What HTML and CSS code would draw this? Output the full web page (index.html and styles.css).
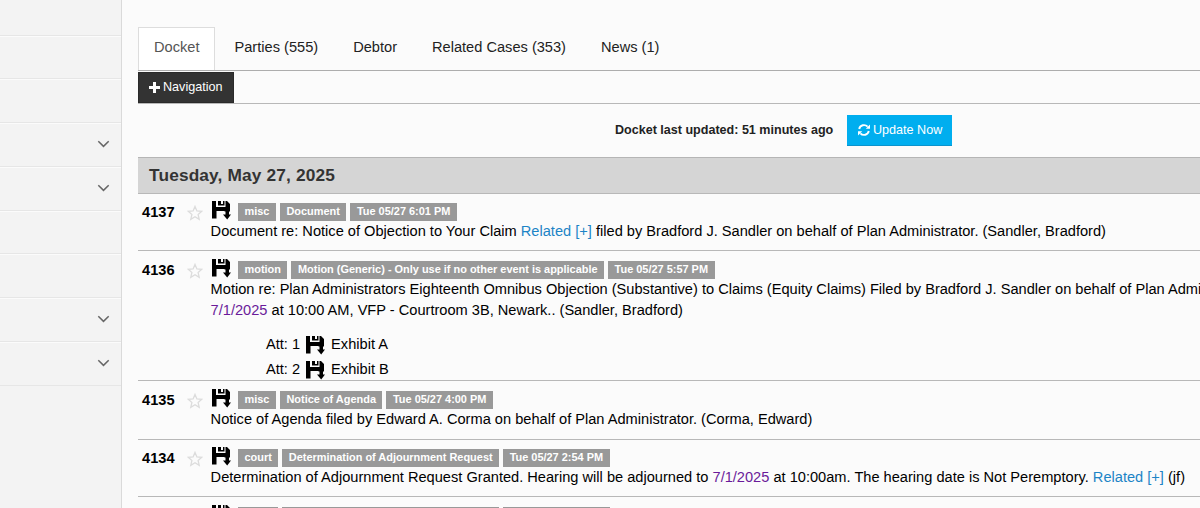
FILE: index.html
```html
<!DOCTYPE html>
<html lang="en">
<head>
    <meta charset="UTF-8">
    <meta name="viewport" content="width=device-width, initial-scale=1.0">
    <title>Docket</title>
    <link rel="stylesheet" href="styles.css">
</head>
<body>
    <svg class="defs" width="0" height="0">
        <symbol id="chevron" viewBox="0 0 12 8"><path d="M.8 1.2 6 6.4l5.2-5.2" fill="none" stroke="#666" stroke-width="1.5"/></symbol>
        <symbol id="star" viewBox="0 0 16 16"><path d="M8 1.4l1.9 4.5 4.9.4-3.7 3.2 1.1 4.8L8 11.7l-4.2 2.6 1.1-4.8L1.2 6.3l4.9-.4z" fill="none" stroke="#dcdcdc" stroke-width="1.3"/></symbol>
        <symbol id="save" viewBox="0 0 20 20"><path d="M1 1h4v6h9.5V1H16l3 3v7.500h-5.500V11H5.500v7.500H1zM7 1h3v3h2V1h1.500v4.500H7zM14.500 10h3.500v4.500h2L16.200 19.500 12 14.500h2.500z"/></symbol>
    </svg>
    <div class="sidebar">
        <div class="item first"></div>
        <div class="item"></div>
        <div class="item"></div>
        <div class="item"><svg><use href="#chevron"/></svg></div>
        <div class="item"><svg><use href="#chevron"/></svg></div>
        <div class="item"></div>
        <div class="item"></div>
        <div class="item"><svg><use href="#chevron"/></svg></div>
        <div class="item"><svg><use href="#chevron"/></svg></div>
    </div>
    <div class="main">
        <div class="tabs">
            <a class="tab active">Docket</a>
            <a class="tab">Parties (555)</a>
            <a class="tab">Debtor</a>
            <a class="tab">Related Cases (353)</a>
            <a class="tab">News (1)</a>
        </div>
        <div class="navbar">
            <a class="btn dark"><svg class="plus" viewBox="0 0 11 11"><path d="M4 0h3v4h4v3H7v4H4V7H0V4h4z" fill="#fff"/></svg>Navigation</a>
        </div>
        <div class="update">
            <b>Docket last updated: 51 minutes ago</b>
            <a class="btn blue"><svg class="refresh" viewBox="0 0 12 12"><path d="M1.200 5A4.900 4.900 0 0 1 9.600 2.700M10.800 7A4.900 4.900 0 0 1 2.400 9.300" fill="none" stroke="#fff" stroke-width="1.900"/><path d="M12 .6v4.200H7.800zM0 11.400V7.200h4.200z" fill="#fff"/></svg>Update Now</a>
        </div>
        <h2 class="date">Tuesday, May 27, 2025</h2>
        <div class="row r1">
            <div class="num">4137</div>
            <svg class="star"><use href="#star"/></svg>
            <div class="entry">
                <div class="tags"><svg class="save"><use href="#save"/></svg><span>misc</span><span>Document</span><span>Tue 05/27 6:01 PM</span></div>
                <p>Document re: Notice of Objection to Your Claim <a>Related [+]</a> filed by Bradford J. Sandler on behalf of Plan Administrator. (Sandler, Bradford)</p>
            </div>
        </div>
        <div class="row r2">
            <div class="num">4136</div>
            <svg class="star"><use href="#star"/></svg>
            <div class="entry">
                <div class="tags"><svg class="save"><use href="#save"/></svg><span>motion</span><span>Motion (Generic) - Only use if no other event is applicable</span><span>Tue 05/27 5:57 PM</span></div>
                <p>Motion re: Plan Administrators Eighteenth Omnibus Objection (Substantive) to Claims (Equity Claims) Filed by Bradford J. Sandler on behalf of Plan Admi<br><a class="visited">7/1/2025</a> at 10:00 AM, VFP - Courtroom 3B, Newark.. (Sandler, Bradford)</p>
                <div class="atts">
                    <div class="att">Att: 1<svg class="save"><use href="#save"/></svg>Exhibit A</div>
                    <div class="att">Att: 2<svg class="save"><use href="#save"/></svg>Exhibit B</div>
                </div>
            </div>
        </div>
        <div class="row r3">
            <div class="num">4135</div>
            <svg class="star"><use href="#star"/></svg>
            <div class="entry">
                <div class="tags"><svg class="save"><use href="#save"/></svg><span>misc</span><span>Notice of Agenda</span><span>Tue 05/27 4:00 PM</span></div>
                <p>Notice of Agenda filed by Edward A. Corma on behalf of Plan Administrator. (Corma, Edward)</p>
            </div>
        </div>
        <div class="row r4">
            <div class="num">4134</div>
            <svg class="star"><use href="#star"/></svg>
            <div class="entry">
                <div class="tags"><svg class="save"><use href="#save"/></svg><span>court</span><span>Determination of Adjournment Request</span><span>Tue 05/27 2:54 PM</span></div>
                <p>Determination of Adjournment Request Granted. Hearing will be adjourned to <a class="visited">7/1/2025</a> at 10:00am. The hearing date is Not Peremptory. <a>Related [+]</a> (jf)</p>
            </div>
        </div>
        <div class="row r5">
            <div class="num"></div>
            <svg class="star"></svg>
            <div class="entry">
                <div class="tags"><svg class="save"><use href="#save"/></svg><span class="w1"></span><span class="w2"></span><span class="w3"></span></div>
            </div>
        </div>
    </div>
</body>
</html>
```
FILE: styles.css
```css
*{box-sizing: border-box;margin: 0;padding: 0;}
body{display: flex;height: 508px;overflow: hidden;background: #fbfbfb;color: #000;font: 14.61px/21px "Liberation Sans",Arial,sans-serif;}
.defs{position: absolute;}
.sidebar{width: 122px;flex: none;background: #f3f3f3;border-right: 1px solid #dadada;}
.item{display: flex;height: 43.75px;align-items: center;justify-content: flex-end;padding: 0 11px 2px 0;border-top: 1px solid #fbfbfb;border-bottom: 1px solid #e6e6e6;}
.item.first{height: 35.5px;border-top: 0;}
.item svg{width: 13px;height: 8px;}
.main{flex: none;width: 1078px;padding: 27px 0 0 16px;overflow: hidden;}
.tabs{display: flex;height: 44px;border-bottom: 1px solid #adadad;}
.tab{height: 43px;padding: 0 17.5px;line-height: 41px;color: #222;}
.tab.active{width: 77px;margin-right: 2px;padding: 0 0 0 15px;border: 1px solid #ddd;border-bottom: 0;background: #fff;line-height: 39px;color: #555;}
.navbar{height: 33px;padding-top: 1px;border-bottom: 1px solid #b8b8b8;}
.btn{display: flex;align-items: center;height: 31px;color: #fff;font-size: 12.6px;}
.dark{width: 96px;padding-left: 10px;background: #333;border: 1px solid #2a2a2a;}
.plus{width: 11px;height: 11px;margin: 0 3px 1px 0;}
.update{display: flex;align-items: center;height: 53px;padding-left: 477px;color: #222;font-size: 12.55px;}
.update b{width: 232px;white-space: nowrap;}
.blue{width: 105px;padding-left: 11px;background: #00aeef;border-bottom: 1px solid #0c93cc;}
.refresh{width: 12px;height: 12px;margin-right: 3px;}
.date{height: 37px;padding-left: 11px;background: #d5d5d5;border-top: 1px solid #b5b5b5;border-bottom: 1px solid #b8b8b8;font-size: 17.3px;letter-spacing: .15px;line-height: 35px;color: #333;}
.row{display: flex;width: 1400px;padding: 6px 0 0 4px;border-bottom: 1px solid #b8b8b8;}
.num{width: 45px;padding-top: 2px;font-weight: bold;}
.star{width: 16px;height: 16px;margin: 5px 8px 0 0;}
.tags{display: flex;align-items: flex-end;gap: 4px;height: 21px;}
.tags span{height: 18px;padding: 0 6.5px;background: #999;color: #fff;font-size: 10.94px;font-weight: bold;line-height: 17px;white-space: nowrap;}
.save{width: 20px;height: 20px;flex: none;}
.tags .save{margin: 0 3px 1px 0;}
.entry p{margin-left: -.4px;white-space: nowrap;}
.entry a{color: #1c84c6;}
.entry .visited{color: #6a1b9a;}
.r1{height: 57px;}
.r2{height: 130px;padding-top: 7px;}
.r3{height: 59px;padding-top: 7px;}
.r4{height: 57px;}
.r5{height: 57px;padding-top: 7px;}
/* tags of the entry below the fold */
.r5 .w1{width: 40px;}
.r5 .w2{width: 217px;}
.r5 .w3{width: 107px;}
.atts{padding: 11px 0 0 55px;}
.att{display: flex;align-items: center;height: 25.2px;}
.att .save{margin: 0 6px 0 5px;}
```
